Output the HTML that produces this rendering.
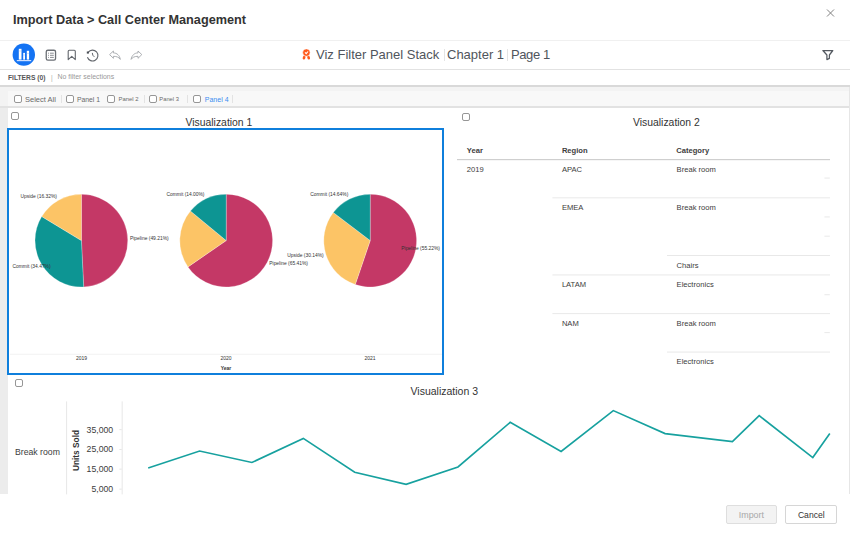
<!DOCTYPE html>
<html><head><meta charset="utf-8">
<style>
*{margin:0;padding:0;box-sizing:border-box}
html,body{width:850px;height:534px;overflow:hidden;background:#fff;font-family:"Liberation Sans",sans-serif}
.a{position:absolute}
.t{position:absolute;white-space:nowrap;line-height:1}
.cb{position:absolute;border:1px solid #969696;border-radius:2px;background:#fff}
.hl{position:absolute;height:1px}
</style></head><body>
<!-- header -->
<div class="t" style="left:13px;top:14px;font-size:12.7px;font-weight:bold;color:#333">Import Data &gt; Call Center Management</div>
<svg class="a" style="left:826px;top:9px" width="9" height="8" viewBox="0 0 9 8"><path d="M1 0.5L8 7.5M8 0.5L1 7.5" stroke="#7a7a7a" stroke-width="0.95" fill="none"/></svg>
<div class="a" style="left:0;top:40px;width:850px;height:1px;background:#f0f0f0"></div>

<!-- toolbar -->
<svg class="a" style="left:0;top:40px" width="160" height="28" viewBox="0 40 160 28">
<circle cx="23.8" cy="54.65" r="11.2" fill="#1473f3"/>
<rect x="18.8" y="48.8" width="2.7" height="10.8" fill="#fff"/>
<rect x="23.2" y="52.9" width="1.8" height="6.7" fill="#fff"/>
<rect x="26.8" y="50.8" width="2.3" height="8.8" fill="#fff"/>
<rect x="16.8" y="60" width="14.4" height="1.2" fill="#cfe0ff"/>
<line x1="18.8" y1="51" x2="21.5" y2="51" stroke="#9cc2ff" stroke-width="0.5"/>
<line x1="23.2" y1="55" x2="25" y2="55" stroke="#9cc2ff" stroke-width="0.5"/>
<line x1="26.8" y1="53.5" x2="29.1" y2="53.5" stroke="#9cc2ff" stroke-width="0.5"/>
<rect x="46.25" y="50.25" width="9.3" height="9.9" rx="1.6" fill="none" stroke="#6b6f75" stroke-width="1.3"/>
<g stroke="#6b6f75" stroke-width="0.8"><line x1="48" y1="53.2" x2="48.9" y2="53.2"/><line x1="50" y1="53.2" x2="53.8" y2="53.2"/><line x1="48" y1="55.3" x2="48.9" y2="55.3"/><line x1="50" y1="55.3" x2="53.8" y2="55.3"/><line x1="48" y1="57.4" x2="48.9" y2="57.4"/><line x1="50" y1="57.4" x2="53.8" y2="57.4"/></g>
<path d="M68.2,59.6 V51.2 Q68.2,50.2 69.2,50.2 H74.3 Q75.3,50.2 75.3,51.2 V59.6 L71.75,56.4 Z" fill="none" stroke="#63676d" stroke-width="1.1" stroke-linejoin="round"/>
<path d="M87.4,57.3 A5.4,5.4 0 1 0 88.2,52.3" fill="none" stroke="#63676d" stroke-width="1.1"/>
<rect x="86.8" y="51.5" width="2.1" height="2.1" fill="#4a4e55"/>
<path d="M92.3,52.9 Q92.3,55.6 94.4,56.9" fill="none" stroke="#63676d" stroke-width="1"/>
<path d="M109.6,54.6 L113.4,51 L113.4,52.9 C117,52.9 119.7,55.5 120.3,59.4 C119,57.3 116.8,56.3 113.4,56.3 L113.4,58.3 Z" fill="none" stroke="#a3a6aa" stroke-width="0.9" stroke-linejoin="round"/>
<path d="M141.8,54.6 L138,51 L138,52.9 C134.4,52.9 131.7,55.5 131.1,59.4 C132.4,57.3 134.6,56.3 138,56.3 L138,58.3 Z" fill="none" stroke="#a3a6aa" stroke-width="0.9" stroke-linejoin="round"/>
</svg>
<svg class="a" style="left:298px;top:46px" width="16" height="16" viewBox="298 46 16 16">
<ellipse cx="304.1" cy="57.6" rx="1.35" ry="2" transform="rotate(18 304.1 57.6)" fill="#ff5a1c"/><ellipse cx="308.6" cy="57.6" rx="1.35" ry="2" transform="rotate(-18 308.6 57.6)" fill="#ff5a1c"/>
<circle cx="306.4" cy="52.6" r="3.7" fill="#ff5a1c" stroke="#fff" stroke-width="0.5"/>
<path d="M305,52.4 L306.2,53.7 L308,51.5" fill="none" stroke="#fff" stroke-width="1.1"/>
</svg>
<svg class="a" style="left:818px;top:46px" width="20" height="18" viewBox="818 46 20 18">
<path d="M822.9,50.5 L832.8,50.5 L829.4,55 L829.4,58.4 L826.9,59.6 L826.9,55 Z" fill="none" stroke="#555a61" stroke-width="1.25" stroke-linejoin="round"/>
</svg>
<div class="a" style="left:0;top:68.5px;width:850px;height:1.5px;background:#e2e2e2"></div>

<div class="t" style="left:316px;top:48px;font-size:13px;color:#50555c">Viz Filter Panel Stack</div>
<div class="a" style="left:443.5px;top:48.5px;width:1px;height:12.5px;background:#e4e4e4"></div>
<div class="t" style="left:447px;top:48px;font-size:13px;color:#50555c">Chapter 1</div>
<div class="a" style="left:506.5px;top:48.5px;width:1px;height:12.5px;background:#e4e4e4"></div>
<div class="t" style="left:511px;top:48px;font-size:13px;letter-spacing:-0.4px;color:#50555c">Page 1</div>

<!-- filters row -->
<div class="t" style="left:8px;top:74.8px;font-size:6.7px;font-weight:bold;color:#555">FILTERS (0)</div>
<div class="t" style="left:51px;top:74.5px;font-size:6.3px;color:#aaa">|</div>
<div class="t" style="left:57.5px;top:74.3px;font-size:6.95px;color:#999">No filter selections</div>
<div class="a" style="left:0;top:85px;width:850px;height:2px;background:#d9d9d9"></div>

<!-- gray content bg -->
<div class="a" style="left:0;top:87px;width:850px;height:407px;background:#ececec"></div>
<div class="a" style="left:0;top:87px;width:850px;height:20px;background:#f3f3f3"></div>
<!-- tab bar -->
<div class="a" style="left:8px;top:91px;width:842px;height:15px;background:#f8f8f8"></div>
<div class="a" style="left:0;top:106px;width:850px;height:2px;background:#e2e2e2"></div>


<!-- tab items -->
<div class="cb" style="left:14px;top:95px;width:8px;height:8px"></div>
<div class="t" style="left:25px;top:95.5px;font-size:7.5px;color:#6a6a6a">Select All</div>
<div class="a" style="left:60.5px;top:95px;width:1px;height:8px;background:#e3e3e3"></div>
<div class="cb" style="left:65.5px;top:95px;width:8px;height:8px"></div>
<div class="t" style="left:77px;top:96.5px;font-size:6.8px;color:#6a6a6a">Panel 1</div>
<div class="cb" style="left:107.3px;top:95px;width:8px;height:8px"></div>
<div class="t" style="left:118.5px;top:96.5px;font-size:5.9px;color:#6a6a6a">Panel 2</div>
<div class="a" style="left:144px;top:95px;width:1px;height:8px;background:#e3e3e3"></div>
<div class="cb" style="left:149.2px;top:95px;width:8px;height:8px"></div>
<div class="t" style="left:159.3px;top:96.5px;font-size:5.8px;color:#6a6a6a">Panel 3</div>
<div class="a" style="left:187px;top:95px;width:1px;height:8px;background:#e3e3e3"></div>
<div class="cb" style="left:193px;top:95px;width:8px;height:8px"></div>
<div class="t" style="left:204.8px;top:95.8px;font-size:7px;color:#3d8ef0">Panel 4</div>
<div class="a" style="left:232.3px;top:95px;width:1px;height:8px;background:#e3e3e3"></div>

<!-- main white -->
<div class="a" style="left:8px;top:108px;width:841px;height:386px;background:#fff"></div>
<div class="a" style="left:849px;top:87px;width:1px;height:407px;background:#e6e6e6"></div>


<!-- VIZ 1 -->
<div class="cb" style="left:10.8px;top:112.2px;width:8px;height:8px"></div>
<div class="t" style="left:185.5px;top:117.5px;font-size:10.4px;color:#333">Visualization 1</div>
<div class="a" style="left:7px;top:127.5px;width:437px;height:247px;border:2px solid #0f7fdc"></div>
<svg class="a" style="left:0;top:0" width="450" height="380" viewBox="0 0 450 380">
<g stroke="#fff" stroke-width="0.25">
<path d="M81.4,240.6 L81.40,194.20 A46.4,46.4 0 0 1 83.70,286.94 Z" fill="#c43866"/>
<path d="M81.4,240.6 L83.70,286.94 A46.4,46.4 0 0 1 41.73,216.53 Z" fill="#0d9593"/>
<path d="M81.4,240.6 L41.73,216.53 A46.4,46.4 0 0 1 81.40,194.20 Z" fill="#fcc466"/>
<path d="M226.2,240.6 L226.20,194.20 A46.4,46.4 0 1 1 187.97,266.90 Z" fill="#c43866"/>
<path d="M226.2,240.6 L187.97,266.90 A46.4,46.4 0 0 1 190.45,211.02 Z" fill="#fcc466"/>
<path d="M226.2,240.6 L190.45,211.02 A46.4,46.4 0 0 1 226.20,194.20 Z" fill="#0d9593"/>
<path d="M370.2,240.6 L370.20,194.20 A46.4,46.4 0 1 1 355.25,284.53 Z" fill="#c43866"/>
<path d="M370.2,240.6 L355.25,284.53 A46.4,46.4 0 0 1 333.29,212.48 Z" fill="#fcc466"/>
<path d="M370.2,240.6 L333.29,212.48 A46.4,46.4 0 0 1 370.20,194.20 Z" fill="#0d9593"/>
</g>
<g font-family="Liberation Sans" font-size="4.9" fill="#333">
<text x="56.9" y="197.5" text-anchor="end">Upside (16.32%)</text>
<text x="130" y="240.3">Pipeline (49.21%)</text>
<text x="50.6" y="267.6" text-anchor="end">Commit (34.47%)</text>
<text x="204.5" y="195.8" text-anchor="end">Commit (14.00%)</text>
<text x="269.3" y="265.3">Pipeline (65.41%)</text>
<text x="348.3" y="195.8" text-anchor="end">Commit (14.64%)</text>
<text x="323.7" y="256.5" text-anchor="end">Upside (30.14%)</text>
<text x="401.3" y="250.2">Pipeline (55.22%)</text>
<text x="81.6" y="360" text-anchor="middle" font-size="5">2019</text>
<text x="226.1" y="360" text-anchor="middle" font-size="5">2020</text>
<text x="370" y="360" text-anchor="middle" font-size="5">2021</text>
<text x="226" y="369.8" text-anchor="middle" font-size="5" font-weight="bold">Year</text>
</g>
<rect x="10" y="353.8" width="432" height="0.8" fill="#eeeeee"/>
</svg>

<!-- VIZ 2 -->
<div class="cb" style="left:461.8px;top:112.6px;width:8px;height:8px"></div>
<div class="t" style="left:633px;top:118px;font-size:10.4px;color:#333">Visualization 2</div>
<svg class="a" style="left:450px;top:130px" width="400" height="245" viewBox="450 130 400 245">
<g font-family="Liberation Sans" font-size="7.6" fill="#3c3c3c">
<text x="466.8" y="152.5" font-weight="bold" fill="#404040">Year</text>
<text x="561.9" y="152.5" font-weight="bold" fill="#404040">Region</text>
<text x="676.2" y="152.5" font-weight="bold" fill="#404040">Category</text>
<text x="466.8" y="171.8">2019</text>
<text x="561.9" y="171.8">APAC</text>
<text x="676.6" y="171.8">Break room</text>
<text x="561.9" y="210.2">EMEA</text>
<text x="676.6" y="210.2">Break room</text>
<text x="676.6" y="268">Chairs</text>
<text x="561.9" y="287.2">LATAM</text>
<text x="676.6" y="287.2">Electronics</text>
<text x="561.9" y="325.6">NAM</text>
<text x="676.6" y="325.6">Break room</text>
<text x="676.6" y="364">Electronics</text>
</g>
<rect x="457" y="159" width="373" height="1.2" fill="#cfcfcf"/>
<g fill="#e6e6e6">
<rect x="552.4" y="197.4" width="277.6" height="0.9"/>
<rect x="667" y="255.1" width="163" height="0.9"/>
<rect x="552.4" y="274.5" width="277.6" height="0.9"/>
<rect x="552.4" y="313.2" width="277.6" height="0.9"/>
<rect x="667" y="351.6" width="163" height="0.9"/>
<rect x="824.4" y="177.6" width="5.4" height="0.9"/>
<rect x="824.4" y="216.5" width="5.4" height="0.9"/>
<rect x="824.4" y="235.7" width="5.4" height="0.9"/>
<rect x="824.4" y="294.3" width="5.4" height="0.9"/>
<rect x="824.4" y="332.2" width="5.4" height="0.9"/>
</g>
</svg>

<!-- VIZ 3 -->
<div class="cb" style="left:14.5px;top:379px;width:8px;height:8px"></div>
<div class="t" style="left:410.5px;top:386.2px;font-size:10.5px;color:#333">Visualization 3</div>
<svg class="a" style="left:0;top:395px" width="850" height="100" viewBox="0 395 850 100">
<rect x="66.2" y="401.4" width="0.9" height="93" fill="#e4e4e4"/>
<rect x="121.7" y="401.4" width="0.9" height="93" fill="#e4e4e4"/>
<g font-family="Liberation Sans" font-size="8.7" fill="#3c3c3c">
<text x="15" y="454.6">Break room</text>
<text x="113.2" y="432.6" text-anchor="end">35,000</text>
<text x="113.2" y="452.4" text-anchor="end">25,000</text>
<text x="113.2" y="472.1" text-anchor="end">15,000</text>
<text x="113.2" y="492.2" text-anchor="end">5,000</text>
<text transform="translate(78.6,450.5) rotate(-90)" text-anchor="middle" font-weight="bold" font-size="8.3" fill="#333">Units Sold</text>
</g>
<g fill="#e0e0e0">
<rect x="119.3" y="429.3" width="2.4" height="0.8"/>
<rect x="119.3" y="449.2" width="2.4" height="0.8"/>
<rect x="119.3" y="468.7" width="2.4" height="0.8"/>
<rect x="119.3" y="488.7" width="2.4" height="0.8"/>
</g>
<polyline points="148.2,468 199.6,451 251.9,462.5 303.3,438.4 354.7,472.3 406.1,484.4 458,467 510.2,422.3 561.1,451.5 613.3,410.6 665.1,433.6 732.4,441.6 759.2,415.7 812.8,457.6 829.8,433.6" fill="none" stroke="#17a19f" stroke-width="1.65" stroke-linejoin="miter"/>
</svg>

<!-- footer -->
<div class="a" style="left:726px;top:504.5px;width:51px;height:19px;background:#f3f3f3;border:1px solid #dedede;border-radius:2px"></div>
<div class="t" style="left:738.8px;top:510.5px;font-size:8.9px;color:#a8a8a8">Import</div>
<div class="a" style="left:785px;top:504.5px;width:51.5px;height:19px;background:#fff;border:1px solid #d6d6d6;border-radius:2px"></div>
<div class="t" style="left:797.9px;top:511px;font-size:8.6px;color:#333">Cancel</div>
</body></html>
